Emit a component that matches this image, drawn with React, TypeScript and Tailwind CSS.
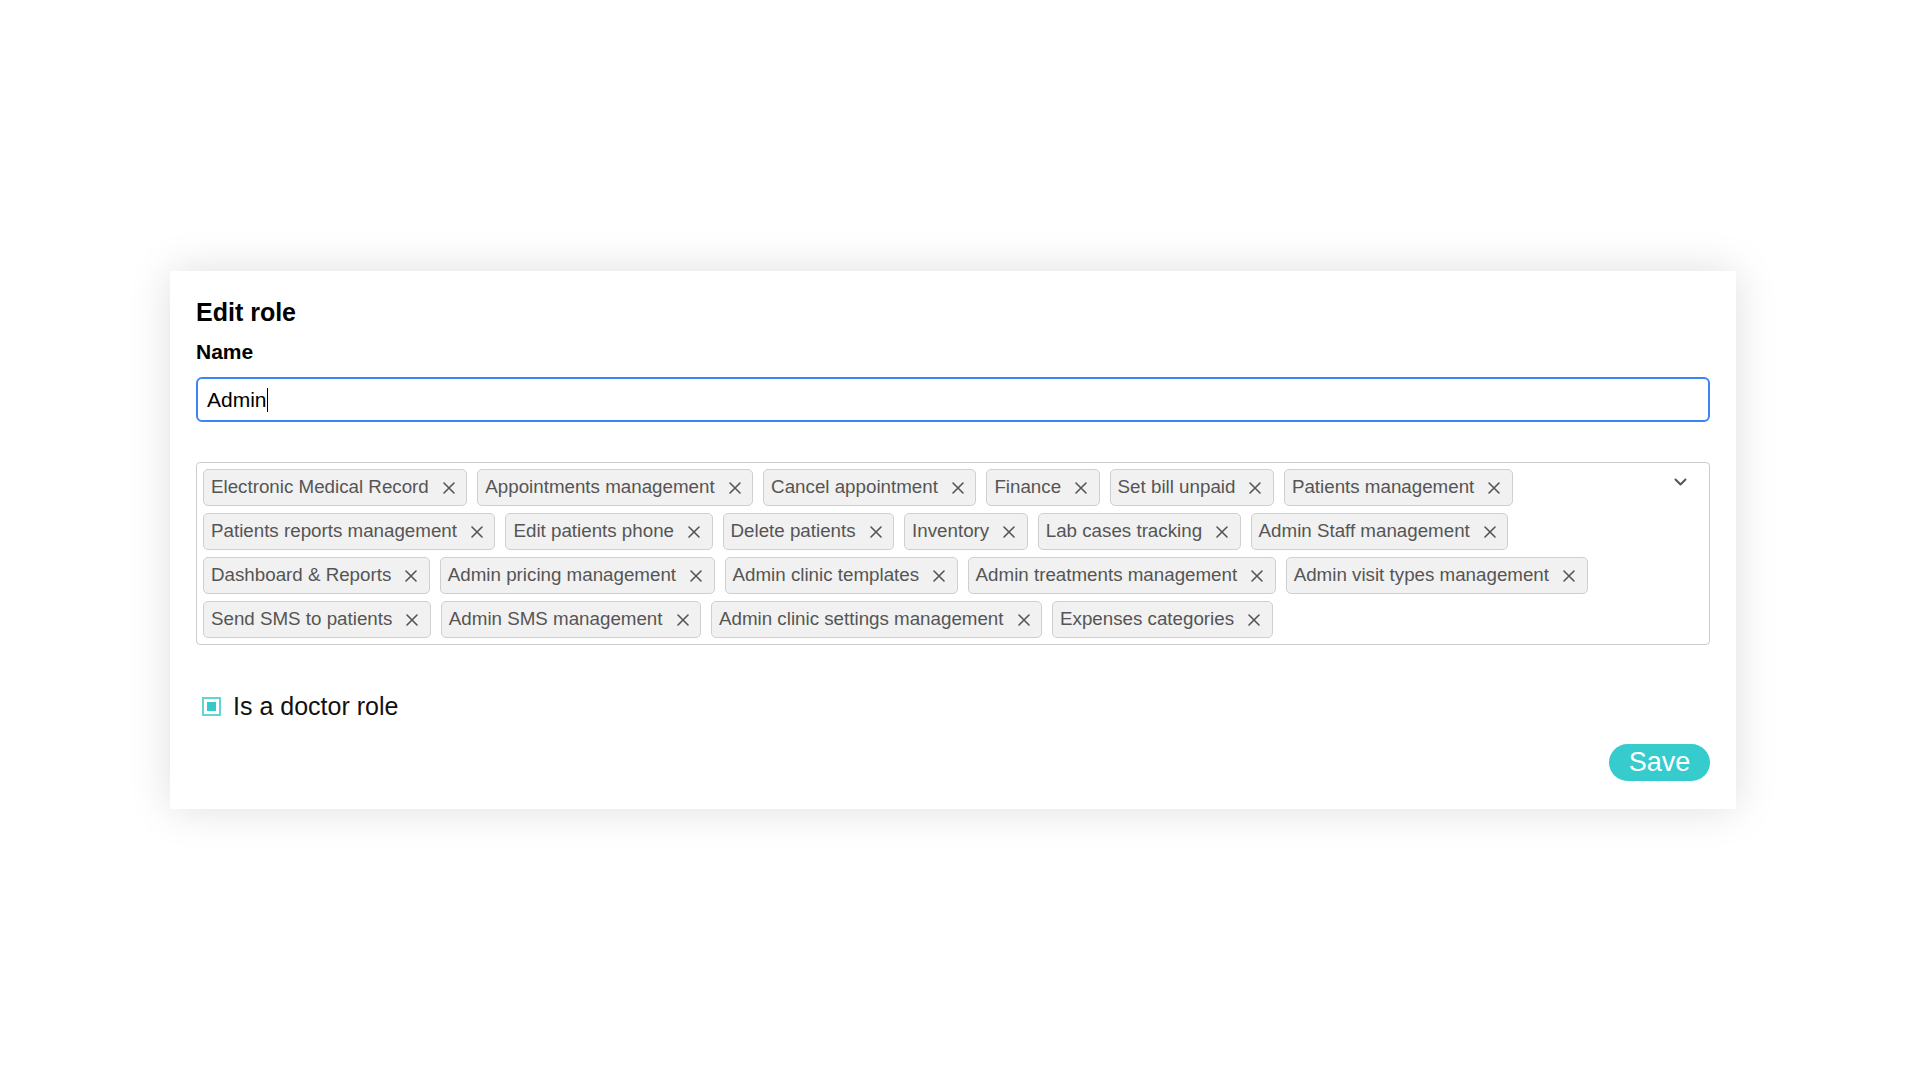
const permissions = [
  'Electronic Medical Record',
  'Appointments management',
  'Cancel appointment',
  'Finance',
  'Set bill unpaid',
  'Patients management',
  'Patients reports management',
  'Edit patients phone',
  'Delete patients',
  'Inventory',
  'Lab cases tracking',
  'Admin Staff management',
  'Dashboard & Reports',
  'Admin pricing management',
  'Admin clinic templates',
  'Admin treatments management',
  'Admin visit types management',
  'Send SMS to patients',
  'Admin SMS management',
  'Admin clinic settings management',
  'Expenses categories',
]

function CloseIcon() {
  return (
    <svg width="12" height="12" viewBox="0 0 12 12" fill="none" stroke="#555" strokeWidth="1.6" strokeLinecap="round">
      <path d="M1 1L11 11M11 1L1 11" />
    </svg>
  )
}

function Chip({ label }: { label: string }) {
  return (
    <div className="h-[37px] flex items-center gap-[14px] pl-[7px] pr-[11.5px] border border-[#cfcfcf] bg-[#f1f1f1] rounded-[5px] text-[18.75px] leading-none text-[#555]">
      <span>{label}</span>
      <CloseIcon />
    </div>
  )
}

export default function App() {
  return (
    <div className="min-h-screen bg-white pt-[271px] pl-[170px] font-['Liberation_Sans',Arial,sans-serif]">
      <div className="w-[1566px] bg-white shadow-[0_0_40px_rgba(0,0,0,0.13)] px-[26px] pt-[27px] pb-[28px]">
        <h2 className="text-[25px] leading-[28px] font-bold text-black">Edit role</h2>
        <div className="mt-[14px] text-[21px] leading-[24px] font-bold text-black">Name</div>

        <div className="mt-[13px] h-[45px] border-2 border-[#3d85f6] rounded-[6px] px-[9px] flex items-center">
          <span className="text-[21px] leading-none text-black">Admin</span>
          <span className="w-[1.5px] h-[24px] bg-black" />
        </div>

        <div className="mt-[40px] border border-[#cccccc] rounded-[4px] p-[6px] flex">
          <div className="flex-1 flex flex-wrap gap-x-[10px] gap-y-[7px]">
            {permissions.map((p) => (
              <Chip key={p} label={p} />
            ))}
          </div>
          <div className="w-[45px] flex justify-center pt-[9px]">
            <svg width="13" height="8" viewBox="0 0 13 8" fill="none" stroke="#555" strokeWidth="2" strokeLinecap="round" strokeLinejoin="round">
              <path d="M1.5 1.5L6.5 6.5L11.5 1.5" />
            </svg>
          </div>
        </div>

        <div className="mt-[46px] h-[30px] flex items-center gap-[12px] pl-[6px]">
          <div className="w-[19px] h-[19px] border-2 border-[#63d4d6] flex items-center justify-center">
            <div className="w-[9px] h-[9px] bg-[#35c9cc]" />
          </div>
          <span className="text-[25px] leading-none text-[#111]">Is a doctor role</span>
        </div>

        <div className="mt-[23px] flex justify-end">
          <button className="h-[37px] w-[101px] rounded-full bg-[#36cbcd] text-white text-[27px] leading-none flex items-center justify-center">
            Save
          </button>
        </div>
      </div>
    </div>
  )
}
